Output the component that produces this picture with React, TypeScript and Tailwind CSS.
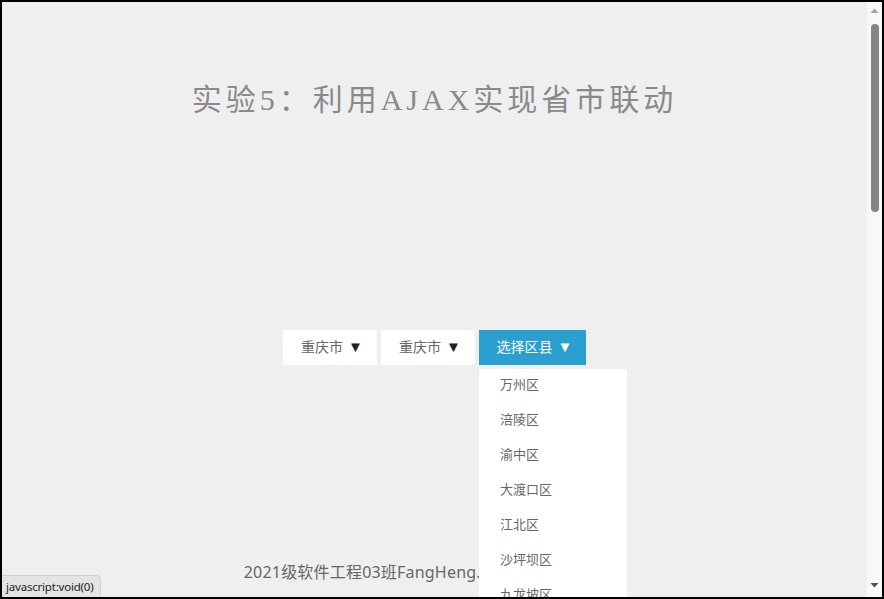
import React from "react";

const serif = { fontFamily: '"Liberation Serif", "Noto Sans CJK SC", serif' };

export default function App() {
  const items = ["万州区", "涪陵区", "渝中区", "大渡口区", "江北区", "沙坪坝区", "九龙坡区", "南岸区"];
  return (
    <div className="w-[884px] h-[599px] border-2 border-black bg-[#efefef] overflow-hidden flex relative">
      <div className="flex-1 flex flex-col items-center relative">
        <h1
          className="mt-[83px] text-[30px] leading-[30px] tracking-[4px] text-[#8a8a8a] font-normal"
          style={{ fontFamily: '"Liberation Serif", "Noto Sans CJK SC", serif' }}
        >
          实验5：利用AJAX实现省市联动
        </h1>
        <div className="mt-[215px] flex gap-[4px] relative" style={serif}>
          <div className="w-[94px] h-[35px] bg-white flex items-center justify-center pl-[4px] text-[14px] text-[#666]">
            重庆市<span className="ml-[5px] text-[#222] text-[15px]">▼</span>
          </div>
          <div className="w-[94px] h-[35px] bg-white flex items-center justify-center pl-[4px] text-[14px] text-[#666]">
            重庆市<span className="ml-[5px] text-[#222] text-[15px]">▼</span>
          </div>
          <div className="relative">
            <div className="w-[107px] h-[35px] bg-[#2a9fd0] flex items-center justify-center pl-[4px] text-[14px] text-white">
              选择区县<span className="ml-[5px] text-[15px]">▼</span>
            </div>
            <div className="absolute left-0 top-[39px] w-[148px] bg-white z-10">
              {items.map((t) => (
                <div key={t} className="h-[35px] pl-[21px] pb-[3px] flex items-center text-[13px] text-[#666]">
                  {t}
                </div>
              ))}
            </div>
          </div>
        </div>
        <div
          className="mt-[195px] text-[16px] leading-[24px] text-[#666] whitespace-nowrap tracking-[0.2px]"
          style={{ fontFamily: '"Noto Sans", "Noto Sans CJK SC", sans-serif' }}
        >
          2021级软件工程03班FangHeng. All rights reserved
        </div>
        <div
          className="absolute left-0 bottom-0 h-[22px] w-[99px] pl-[4px] flex items-center bg-[#e4e4e4] border-t border-r border-[#cfcfcf] rounded-tr-[5px] text-[11.5px] tracking-[-0.2px] text-[#222]"
          style={{ fontFamily: '"Noto Sans", sans-serif' }}
        >
          javascript:void(0)
        </div>
      </div>
      <div className="w-[15px] h-full bg-[#f8f8f8] flex flex-col items-center">
        <svg width="15" height="17" viewBox="0 0 15 17" className="shrink-0">
          <polygon points="3.5,11 7.5,6.5 11.5,11" fill="#a3a3a3" />
        </svg>
        <div className="w-[8px] h-[188px] mt-[5px] rounded-full bg-[#858585]" />
        <div className="flex-1" />
        <svg width="15" height="17" viewBox="0 0 15 17" className="shrink-0 mb-[3px]">
          <polygon points="3.5,6 11.5,6 7.5,10.5" fill="#505050" />
        </svg>
      </div>
    </div>
  );
}
